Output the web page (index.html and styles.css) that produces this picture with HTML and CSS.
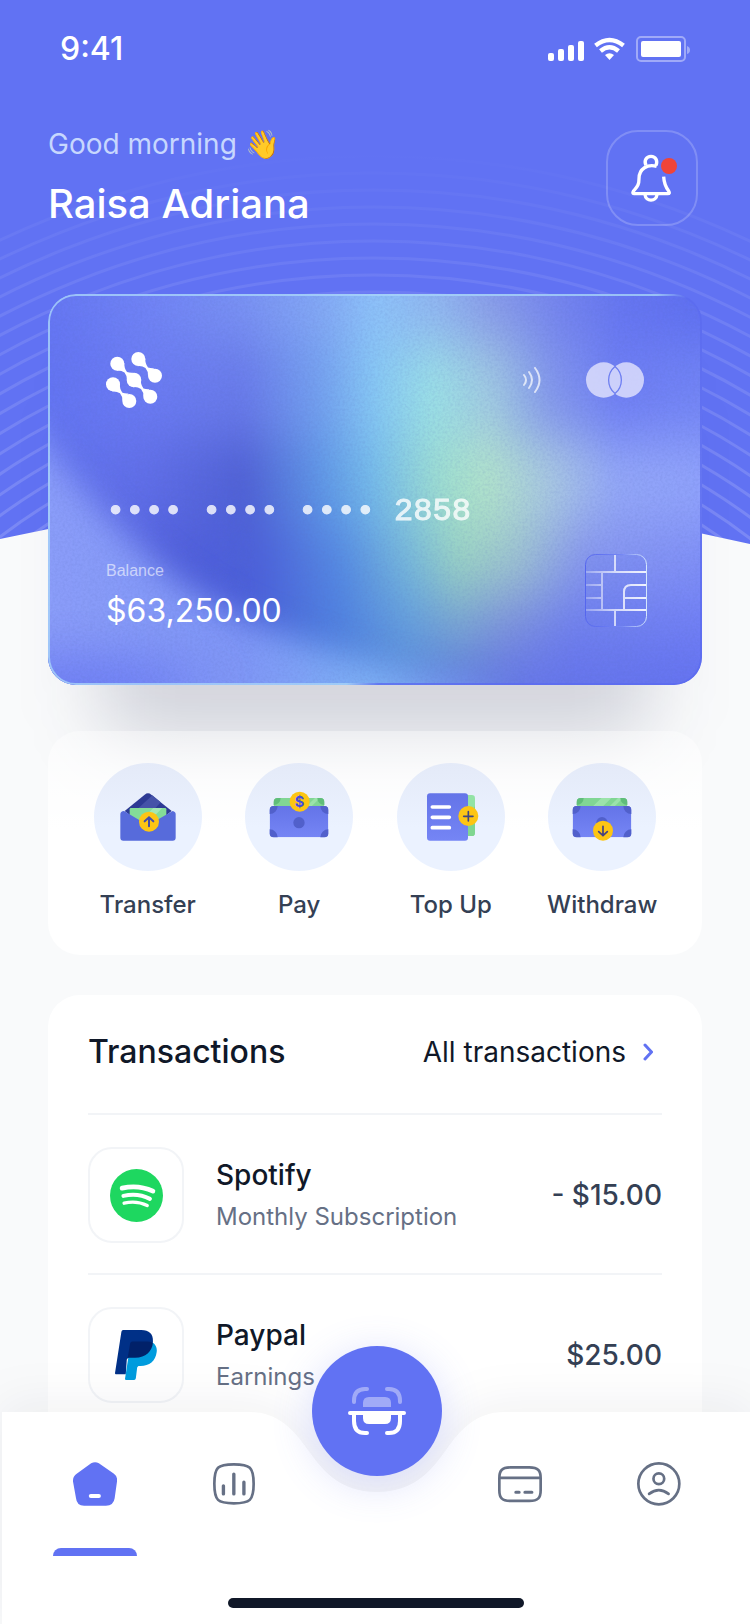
FILE: index.html
```html
<!DOCTYPE html>
<html lang="en">
<head>
  <meta charset="utf-8">
  <meta name="viewport" content="width=device-width, initial-scale=1">
  <title>Wallet</title>
  <link rel="stylesheet" href="styles.css">
</head>
<body>
  <div class="app">
    <svg class="backdrop" viewBox="0 0 750 560" aria-hidden="true">
      <defs>
        <linearGradient id="ring-fade" gradientUnits="userSpaceOnUse" x1="0" y1="150" x2="0" y2="540">
          <stop offset="0" stop-color="#fff" stop-opacity="0"/>
          <stop offset=".35" stop-color="#fff" stop-opacity=".08"/>
          <stop offset="1" stop-color="#fff" stop-opacity=".16"/>
        </linearGradient>
        <clipPath id="backdrop-clip">
          <path d="M0 0H750V544Q375 456 0 539Z"/>
        </clipPath>
      </defs>
      <g clip-path="url(#backdrop-clip)">
        <rect width="750" height="560" fill="#6172f3"/>
        <g fill="none" stroke="url(#ring-fade)" stroke-width="3">
          <circle cx="374" cy="1029" r="873"/>
          <circle cx="374" cy="1029" r="856"/>
          <circle cx="374" cy="1029" r="839"/>
          <circle cx="374" cy="1029" r="822"/>
          <circle cx="374" cy="1029" r="805"/>
          <circle cx="374" cy="1029" r="788"/>
          <circle cx="374" cy="1029" r="771"/>
          <circle cx="374" cy="1029" r="754"/>
          <circle cx="374" cy="1029" r="737"/>
          <circle cx="374" cy="1029" r="720"/>
          <circle cx="374" cy="1029" r="703"/>
          <circle cx="374" cy="1029" r="686"/>
          <circle cx="374" cy="1029" r="669"/>
          <circle cx="374" cy="1029" r="652"/>
          <circle cx="374" cy="1029" r="635"/>
          <circle cx="374" cy="1029" r="618"/>
          <circle cx="374" cy="1029" r="601"/>
        </g>
      </g>
    </svg>

    <div class="status-bar">
      <span>9:41</span>
      <svg width="142" height="26" viewBox="0 0 142 26" fill="#fff" aria-hidden="true">
        <rect x="0" y="17" width="6" height="8" rx="2"/>
        <rect x="10" y="13" width="6" height="12" rx="2"/>
        <rect x="20" y="9" width="6" height="16" rx="2"/>
        <rect x="30" y="5" width="6" height="20" rx="2"/>
        <g fill="none" stroke="#fff" stroke-width="4.4">
          <path d="M47.5 9.5Q61.500-1.500 75.500 9.500"/>
          <path d="M52.500 15Q61.500 7.500 70.500 15"/>
        </g>
        <path d="M57 19Q61.500 15.500 66 19L61.500 24Z"/>
        <rect x="89" y="1" width="48" height="24" rx="4" fill="none" stroke="#fff" stroke-opacity=".4" stroke-width="2"/>
        <rect x="93" y="5" width="40" height="16" rx="2"/>
        <path d="M139 10Q142 11 142 14T139 18Z" fill-opacity=".4"/>
      </svg>
    </div>

    <header class="header">
      <div>
        <p class="greeting">Good morning 👋</p>
        <h1 class="user-name">Raisa Adriana</h1>
      </div>
      <button class="bell-button" type="button" aria-label="Notifications">
        <svg width="50" height="48" viewBox="0 0 150 144" fill="none" stroke="#fff" stroke-width="10" aria-hidden="true">
          <path d="M89 37C62 29 36 44 36 74C36 94 30 98 19 112C16 117 18 119 22 119H122C128 119 128 116 125 111C115 98 111 88 110 68"/>
          <path d="M57 34C50 20 58 7 72 7S93 20 87 34"/>
          <path d="M54 122C56 144 88 144 90 122"/>
          <circle cx="126" cy="36" r="24" fill="#f04438" stroke="none"/>
        </svg>
      </button>
    </header>

    <main class="content">
      <section class="card">
        <svg class="card-art" viewBox="0 0 654 391" preserveAspectRatio="none" aria-hidden="true">
          <defs>
            <filter id="blend" x="-5%" y="-5%" width="110%" height="110%" color-interpolation-filters="sRGB"><feGaussianBlur stdDeviation="10 28"/></filter>
            <filter id="soft" x="-30%" y="-30%" width="160%" height="160%" color-interpolation-filters="sRGB"><feGaussianBlur stdDeviation="16"/></filter>
            <filter id="corner" x="-80%" y="-80%" width="260%" height="260%" color-interpolation-filters="sRGB"><feGaussianBlur stdDeviation="26"/></filter>
            <filter id="grain" x="0" y="0" width="100%" height="100%">
              <feTurbulence type="fractalNoise" baseFrequency=".4" numOctaves="2"/>
              <feColorMatrix values="0 0 0 0 .1  0 0 0 0 .15  0 0 0 0 .5  0 0 0 -.9 .55"/>
            </filter>
            <linearGradient id="row-1" gradientUnits="userSpaceOnUse" x1="0" x2="654">
              <stop offset="0" stop-color="#6576f3"/>
              <stop offset=".15" stop-color="#7083f5"/>
              <stop offset=".3" stop-color="#7a92f4"/>
              <stop offset=".42" stop-color="#84a9f5"/>
              <stop offset=".5" stop-color="#8dc2f9"/>
              <stop offset=".6" stop-color="#90b4f0"/>
              <stop offset=".68" stop-color="#889be9"/>
              <stop offset=".78" stop-color="#7484ee"/>
              <stop offset=".88" stop-color="#6575f1"/>
              <stop offset="1" stop-color="#5e6ff1"/>
            </linearGradient>
            <linearGradient id="row-2" gradientUnits="userSpaceOnUse" x1="0" x2="654">
              <stop offset="0" stop-color="#6374f2"/>
              <stop offset=".15" stop-color="#6b7bf3"/>
              <stop offset=".3" stop-color="#697bea"/>
              <stop offset=".42" stop-color="#74a2ef"/>
              <stop offset=".5" stop-color="#86c8f4"/>
              <stop offset=".59" stop-color="#9be0e6"/>
              <stop offset=".68" stop-color="#a0c8e2"/>
              <stop offset=".77" stop-color="#8397ec"/>
              <stop offset=".87" stop-color="#6e7ef4"/>
              <stop offset="1" stop-color="#7284f5"/>
            </linearGradient>
            <linearGradient id="row-3" gradientUnits="userSpaceOnUse" x1="0" x2="654">
              <stop offset="0" stop-color="#6273ee"/>
              <stop offset=".15" stop-color="#606ee8"/>
              <stop offset=".3" stop-color="#4f60d4"/>
              <stop offset=".42" stop-color="#5f98e6"/>
              <stop offset=".5" stop-color="#76bdea"/>
              <stop offset=".6" stop-color="#9eded0"/>
              <stop offset=".67" stop-color="#b2e4ca"/>
              <stop offset=".78" stop-color="#a8c6e4"/>
              <stop offset=".87" stop-color="#94a8f8"/>
              <stop offset="1" stop-color="#91a3fc"/>
            </linearGradient>
            <linearGradient id="row-4" gradientUnits="userSpaceOnUse" x1="0" x2="654">
              <stop offset="0" stop-color="#5a68e4"/>
              <stop offset=".22" stop-color="#4f5edb"/>
              <stop offset=".33" stop-color="#4c62da"/>
              <stop offset=".45" stop-color="#558be2"/>
              <stop offset=".55" stop-color="#76b8da"/>
              <stop offset=".63" stop-color="#9ad3c2"/>
              <stop offset=".72" stop-color="#9dc2d0"/>
              <stop offset=".82" stop-color="#8796ee"/>
              <stop offset="1" stop-color="#8090f7"/>
            </linearGradient>
            <linearGradient id="row-5" gradientUnits="userSpaceOnUse" x1="0" x2="654">
              <stop offset=".3" stop-color="#495cd8"/>
              <stop offset=".45" stop-color="#4f81e0"/>
              <stop offset=".55" stop-color="#639ddd"/>
              <stop offset=".63" stop-color="#78a4d2"/>
              <stop offset=".7" stop-color="#7d93dc"/>
              <stop offset=".8" stop-color="#7080ee"/>
              <stop offset="1" stop-color="#707ff5"/>
            </linearGradient>
            <linearGradient id="row-6" gradientUnits="userSpaceOnUse" x1="0" x2="654">
              <stop offset=".4" stop-color="#5282de"/>
              <stop offset=".55" stop-color="#5c8cdc"/>
              <stop offset=".65" stop-color="#627ce0"/>
              <stop offset=".74" stop-color="#6575ea"/>
              <stop offset="1" stop-color="#6472f0"/>
            </linearGradient>
            <linearGradient id="sweep" gradientUnits="userSpaceOnUse" x1="0" x2="654">
              <stop offset="0" stop-color="#8b9df9"/>
              <stop offset=".3" stop-color="#7f96f6"/>
              <stop offset=".5" stop-color="#7eb2f5"/>
              <stop offset=".68" stop-color="#7489ee"/>
            </linearGradient>
            <linearGradient id="card-edge" gradientUnits="userSpaceOnUse" x1="0" y1="0" x2="392" y2="313">
              <stop offset="0" stop-color="#a9d4fb"/>
              <stop offset=".95" stop-color="#a6d3f8"/>
              <stop offset="1.000" stop-color="#5b6bf0"/>
            </linearGradient>
          </defs>
          <g filter="url(#blend)">
            <rect x="-60" y="-100" width="774" height="150" fill="url(#row-1)"/>
            <rect x="-60" y="50" width="774" height="95" fill="url(#row-2)"/>
            <rect x="-60" y="145" width="774" height="85" fill="url(#row-3)"/>
            <rect x="-60" y="230" width="774" height="70" fill="url(#row-4)"/>
            <rect x="-60" y="300" width="774" height="60" fill="url(#row-5)"/>
            <rect x="-60" y="360" width="774" height="140" fill="url(#row-6)"/>
          </g>
          <path d="M-60 60C-10 160 50 215 115 275C190 335 290 368 450 396V460H-60Z" fill="url(#sweep)" filter="url(#soft)"/>
          <ellipse cx="20" cy="395" rx="130" ry="30" fill="#6b7bf3" filter="url(#corner)"/>
          <rect width="654" height="391" filter="url(#grain)" opacity=".3"/>
          <rect x="1" y="1" width="652" height="389" rx="27" fill="none" stroke="url(#card-edge)" stroke-width="2" opacity=".8"/>
        </svg>

        <div class="card-top">
          <svg width="56" height="56" viewBox="0 0 56 56" fill="#fff" aria-hidden="true">
            <circle cx="11.300" cy="11.700" r="7"/>
            <circle cx="32.300" cy="7" r="7"/>
            <circle cx="49" cy="23.700" r="7"/>
            <circle cx="28" cy="28" r="7.300"/>
            <circle cx="7" cy="32.300" r="7"/>
            <circle cx="44.300" cy="44.700" r="7"/>
            <circle cx="23.300" cy="49" r="7"/>
            <g id="link">
              <path d="M18.300 11Q18 16 21 20Q24 21 27 20.700L21 28Q21.300 24 18.500 20.500Q15 18.200 10.500 18.700Z"/>
            </g>
            <use href="#link" x="21" y="-4.500"/>
            <use href="#link" x="16.500" y="16.500"/>
            <use href="#link" x="-4.500" y="20.800"/>
          </svg>
          <div class="card-marks">
            <svg width="18" height="26" viewBox="0 0 18 26" fill="none" stroke="#fff" stroke-opacity=".7" stroke-width="2" stroke-linecap="round" aria-hidden="true">
              <path d="M1 8Q5 13 1 18"/>
              <path d="M6 5Q12 13 6 21"/>
              <path d="M12 1Q21 13 12 25"/>
            </svg>
            <svg width="58" height="36" viewBox="0 0 58 36" aria-hidden="true">
              <mask id="lens">
                <g fill="#fff">
                  <circle cx="17.700" cy="18" r="17.700"/>
                  <circle cx="40.300" cy="18" r="17.700"/>
                </g>
                <path d="M29 4.400A17.700 17.700 0 0 1 29 31.600A17.700 17.700 0 0 1 29 4.400Z" fill="none" stroke="#000" stroke-width="1.300"/>
              </mask>
              <rect width="58" height="36" fill="#e0e2fc" fill-opacity=".82" mask="url(#lens)"/>
            </svg>
          </div>
        </div>

        <p class="card-number">•••• •••• •••• 2858</p>

        <div class="card-bottom">
          <div>
            <p class="balance-label">Balance</p>
            <p class="balance-value">$63,250.00</p>
          </div>
          <svg width="62" height="73" viewBox="0 0 62 73" fill="none" aria-hidden="true">
            <defs>
              <linearGradient id="chip-line" gradientUnits="userSpaceOnUse" x1="0" y1="0" x2="62" y2="0">
                <stop offset="0" stop-color="#fff" stop-opacity=".25"/>
                <stop offset=".5" stop-color="#fff" stop-opacity=".7"/>
                <stop offset="1" stop-color="#fff" stop-opacity=".9"/>
              </linearGradient>
              <linearGradient id="chip-edge" x1="0" y1="0" x2="1" y2="0">
                <stop offset="0" stop-color="#5566ee"/>
                <stop offset=".6" stop-color="#7688f4"/>
                <stop offset="1" stop-color="#d4e6fd"/>
              </linearGradient>
            </defs>
            <rect x=".5" y=".5" width="61" height="72" rx="10" fill="#5b6ff0" fill-opacity=".15" stroke="url(#chip-edge)"/>
            <g stroke="url(#chip-line)" stroke-width="2">
              <path d="M30 1V18M1 18.010H61M17 18V56M1 31.010H17M1 44.010H17M1 56.010H61M30 56V72M39 56V38Q39 31 46 31H61M39 44.010H61"/>
            </g>
          </svg>
        </div>
      </section>

      <nav class="actions" aria-label="Quick actions">
        <a class="action" href="#transfer">
          <span class="action-icon">
            <svg width="108" height="108" viewBox="0 0 324 324" aria-hidden="true">
              <path d="M92 144L152 95Q162 87 172 95L233 144L162 200Z" fill="#2d3a94"/>
              <path d="M124 144L175 97L200 118L162 160Z" fill="#4552a8"/>
              <path d="M107 139Q107 135 111 135H213Q217 135 217 139V160L162 196L107 160Z" fill="#84dc98"/>
              <path d="M178 135H205L160 180L140 174Z" fill="#a3e7b2"/>
              <path d="M79 154Q79 145 90 144L152 181Q162 187 172 181L236 144Q245 146 245 154V224Q245 233 236 233H88Q79 233 79 224Z" fill="#576bdb"/>
              <circle cx="165" cy="176" r="30" fill="#fdc513"/>
              <path d="M165 190V164M152 175L165 163L178 175" fill="none" stroke="#444ca8" stroke-width="6" stroke-linecap="round"/>
            </svg>
          </span>
          Transfer
        </a>
        <a class="action" href="#pay">
          <span class="action-icon">
            <svg width="108" height="108" viewBox="0 0 324 324" aria-hidden="true">
              <defs>
                <linearGradient id="note-fill" x1="0" y1="0" x2="0" y2="1">
                  <stop offset="0" stop-color="#6474e8"/>
                  <stop offset="1" stop-color="#7585f5"/>
                </linearGradient>
                <clipPath id="note-clip"><rect x="74" y="129" width="176" height="94" rx="12"/></clipPath>
                <clipPath id="green-clip"><rect x="86" y="105" width="152" height="50" rx="12"/></clipPath>
              </defs>
              <g id="banknote">
                <g clip-path="url(#green-clip)">
                  <rect x="86" y="105" width="152" height="50" fill="#81d694"/>
                  <path d="M160 105H190L165 130H135ZM210 105H225L200 130H185Z" fill="#9be3aa"/>
                  <circle cx="86" cy="105" r="21" fill="#60bd7a"/>
                  <circle cx="238" cy="105" r="21" fill="#60bd7a"/>
                </g>
                <g clip-path="url(#note-clip)">
                  <rect x="74" y="129" width="176" height="94" fill="url(#note-fill)"/>
                  <g fill="#5160cb">
                    <circle cx="74" cy="129" r="24"/>
                    <circle cx="250" cy="129" r="24"/>
                    <circle cx="74" cy="223" r="24"/>
                    <circle cx="250" cy="223" r="24"/>
                    <circle cx="162" cy="179" r="17"/>
                  </g>
                </g>
              </g>
              <circle cx="164" cy="116" r="30" fill="#fdc513"/>
              <text class="coin-sign" x="164" y="132" text-anchor="middle">$</text>
            </svg>
          </span>
          Pay
        </a>
        <a class="action" href="#top-up">
          <span class="action-icon">
            <svg width="108" height="108" viewBox="0 0 324 324" aria-hidden="true">
              <rect x="180" y="96" width="54" height="123" rx="10" fill="#93e3a5"/>
              <path d="M213 152L234 130V209Q234 219 224 219H213Z" fill="#7fd691"/>
              <rect x="90" y="91" width="123" height="142" rx="9" fill="url(#note-fill)"/>
              <path d="M106 132H157M106 163H157M106 194H157" stroke="#fff" stroke-width="11" stroke-linecap="round"/>
              <circle cx="214" cy="159" r="30" fill="#fdc513"/>
              <path d="M200 160H228M214 146V174" stroke="#3f4580" stroke-width="5" stroke-linecap="round"/>
            </svg>
          </span>
          Top Up
        </a>
        <a class="action" href="#withdraw">
          <span class="action-icon">
            <svg width="108" height="108" viewBox="0 0 324 324" aria-hidden="true">
              <use href="#banknote"/>
              <circle cx="165" cy="203" r="30" fill="#fdc513"/>
              <path d="M165 190V217M152 206L165 218L178 206" fill="none" stroke="#444080" stroke-width="5" stroke-linecap="round"/>
            </svg>
          </span>
          Withdraw
        </a>
      </nav>

      <section class="transactions">
        <div class="transactions-head">
          <h2>Transactions</h2>
          <a class="all-link" href="#transactions">
            All transactions
            <svg width="10" height="18" viewBox="0 0 10 18" fill="none" stroke="#6172f3" stroke-width="3" stroke-linecap="round" stroke-linejoin="round" aria-hidden="true">
              <path d="M2 2L8.500 9L2 16"/>
            </svg>
          </a>
        </div>
        <ul class="transaction-list">
          <li class="transaction">
            <span class="brand">
              <svg width="53" height="53" viewBox="0 0 158 158" aria-hidden="true">
                <circle cx="79" cy="79" r="79" fill="#1ed760"/>
                <g fill="none" stroke="#fff" stroke-linecap="round">
                  <path d="M36 57Q85 46 128 66" stroke-width="14"/>
                  <path d="M40 80Q83 70 119 89" stroke-width="12"/>
                  <path d="M42 102Q79 93 111 109" stroke-width="10"/>
                </g>
              </svg>
            </span>
            <div class="details">
              <p class="name">Spotify</p>
              <p class="note">Monthly Subscription</p>
            </div>
            <span class="amount">- $15.00</span>
          </li>
          <li class="transaction">
            <span class="brand">
              <svg width="42" height="50" viewBox="0 0 125 149" aria-hidden="true">
                <path d="M24 0H78C102 0 114 12 113 34C112 62 95 82 60 83H42C38 83 36 85 35 89L32 132H4C1 132 0 131 0 128L19 5Q20 0 24 0Z" fill="#003087"/>
                <path d="M112 37C122 44 126 54 124 66C121 92 102 107 76 107H72C69 107 67 109 66 112L62 144Q61 149 57 149H33Q29 149 30 144L40 80Z" fill="#009cde"/>
                <path d="M52 34H90C100 34 108 35 113 38C110 64 92 82 60 83H42C40 83 38 84 37 88L45 40Q46 34 52 34Z" fill="#012169"/>
              </svg>
            </span>
            <div class="details">
              <p class="name">Paypal</p>
              <p class="note">Earnings</p>
            </div>
            <span class="amount">$25.00</span>
          </li>
        </ul>
      </section>
    </main>

    <nav class="tab-bar" aria-label="Main">
      <svg class="tab-shape" viewBox="0 0 748 212" preserveAspectRatio="none" aria-hidden="true">
        <path d="M0 0H248C276 0 292 18 306 38C320 58 338 80 375 80S430 58 444 38C458 18 474 0 502 0H748V212H0Z" fill="#fff"/>
      </svg>
      <div class="tabs">
        <a class="tab active" href="#home" aria-label="Home">
          <svg width="44" height="44" viewBox="0 0 131 131" aria-hidden="true">
            <path d="M54 4Q66-3 77 4L122 35Q133 43 131 58L124 108Q121 130 98 130H33Q11 130 9 108L0 58Q-1 43 11 35Z" fill="#6172f3"/>
            <path d="M53 101H77" stroke="#fff" stroke-width="12" stroke-linecap="round"/>
          </svg>
        </a>
        <a class="tab" href="#stats" aria-label="Statistics">
          <svg width="44" height="44" viewBox="-3 -3 131 131" fill="none" stroke="#667085" stroke-linecap="round" aria-hidden="true">
            <path d="M62 4C110 4 121 12 121 62S110 120 62 120S4 112 4 62S14 4 62 4Z" stroke-width="8"/>
            <path d="M31 68V92M62 33V92M92 57V92" stroke-width="10"/>
          </svg>
        </a>
        <button class="scan-button" type="button" aria-label="Scan">
          <svg width="60" height="48" viewBox="0 0 60 48" fill="none" stroke="#fff" stroke-width="4" stroke-linecap="round" aria-hidden="true">
            <g opacity=".4">
              <path d="M7 15V14C7 6 11 2 18 2H20M40 2H42C49 2 53 6 53 14V15"/>
              <path d="M16 20V16Q16 10 22 10H38Q44 10 44 16V20Z" fill="#fff" stroke="none"/>
            </g>
            <path d="M3 26H57M7 26V34C7 42 11 46 18 46H20M40 46H42C49 46 53 42 53 34V26"/>
            <path d="M16 27H44V31Q44 37 38 37H22Q16 37 16 31Z" fill="#fff" stroke="none"/>
          </svg>
        </button>
        <a class="tab" href="#cards" aria-label="Cards">
          <svg width="44" height="44" viewBox="0 -12 131 131" fill="none" stroke="#667085" stroke-linecap="round" aria-hidden="true">
            <path d="M38 4H93C120 4 127 14 127 36V72C127 94 120 104 93 104H38C11 104 4 94 4 72V36C4 14 11 4 38 4ZM4 35H127" stroke-width="8"/>
            <path d="M53 78H63M80 78H101" stroke-width="9"/>
          </svg>
        </a>
        <a class="tab" href="#profile" aria-label="Profile">
          <svg width="44" height="44" viewBox="0 0 131 131" fill="none" stroke="#667085" stroke-width="8" stroke-linecap="round" aria-hidden="true">
            <circle cx="65" cy="65" r="61"/>
            <circle cx="65" cy="50" r="16"/>
            <path d="M36 95Q65 72 94 95"/>
          </svg>
        </a>
      </div>
      <div class="home-indicator"></div>
    </nav>
  </div>
</body>
</html>
```
FILE: styles.css
```css
* {
  box-sizing: border-box;
}

body {
  margin: 0;
  background: #f9fafb;
  color: #101828;
  font-family: Inter, "Liberation Sans", sans-serif;
}

h1, h2, p, ul {
  margin: 0;
  padding: 0;
  font-weight: 500;
}

ul {
  list-style: none;
}

a {
  color: inherit;
  text-decoration: none;
}

svg {
  display: block;
  flex-shrink: 0;
}

.app {
  position: relative;
  height: 100vh;
  overflow: hidden;
}

.backdrop {
  position: absolute;
  top: 0;
  left: 0;
  width: 100%;
  z-index: -1;
}

/* Top of the screen */
.status-bar {
  display: flex;
  justify-content: space-between;
  align-items: center;
  padding: 29px 60px 55px;
  color: #fff;
  font-size: 32px;
  font-weight: 500;
  line-height: 40px;
}

.header {
  display: flex;
  justify-content: space-between;
  align-items: center;
  padding: 0 52px 0 48px;
}

.greeting {
  color: #c7d7fe;
  font-size: 28px;
  font-weight: 400;
  line-height: 40px;
}

.user-name {
  margin-top: 12px;
  color: #fff;
  font-size: 40px;
  line-height: 56px;
}

.bell-button {
  display: flex;
  align-items: center;
  justify-content: center;
  width: 92px;
  height: 96px;
  padding: 0;
  border: 2px solid rgba(255, 255, 255, 0.2);
  border-radius: 32px;
  background: none;
}

.content {
  padding: 62px 48px 0;
}

/* Bank card */
.card {
  position: relative;
  padding: 58px 55px 54px 58px;
  border-radius: 28px;
  color: #fff;
}

.card::before {
  content: "";
  position: absolute;
  inset: 90px 50px -56px;
  z-index: -1;
  border-radius: 40px;
  background: rgba(24, 32, 72, 0.17);
  filter: blur(38px);
}

.card-art {
  position: absolute;
  inset: 0;
  width: 100%;
  height: 100%;
  border-radius: 28px;
}

.card-top, .card-number, .card-bottom {
  position: relative;
}

.card-top {
  display: flex;
  justify-content: space-between;
  align-items: center;
}

.card-marks {
  display: flex;
  align-items: center;
  gap: 45px;
  padding-right: 3px;
}

.card-number {
  margin: 84px 0 22px;
  font-family: "Liberation Mono", monospace;
  font-size: 32px;
  line-height: 40px;
  -webkit-text-stroke: 1px #fff;
  opacity: 0.8;
}

.card-bottom {
  display: flex;
  justify-content: space-between;
}

.balance-label {
  margin: 5px 0 8px;
  color: rgba(255, 255, 255, 0.6);
  font-family: "Liberation Sans", sans-serif;
  font-size: 16px;
  line-height: 24px;
}

.balance-value {
  font-size: 32px;
  font-weight: 400;
  line-height: 40px;
}

/* Quick actions */
.actions {
  display: grid;
  grid-template-columns: repeat(4, 1fr);
  margin-top: 46px;
  padding: 32px 24px;
  border-radius: 32px;
  background: linear-gradient(rgba(255, 255, 255, 0.4), #fff 100px);
}

.action {
  display: flex;
  flex-direction: column;
  align-items: center;
  gap: 16px;
  color: #344054;
  font-size: 24px;
  font-weight: 500;
  line-height: 36px;
}

.action-icon {
  border-radius: 50%;
  background: linear-gradient(#e4eaf8, #ebf2ff 60%);
}

.coin-sign {
  fill: #444ce0;
  font-size: 44px;
  font-weight: 700;
}

/* Transactions */
.transactions {
  margin-top: 40px;
  padding: 0 40px 200px;
  border-radius: 32px;
  background: #fff;
}

.transactions-head {
  display: flex;
  justify-content: space-between;
  align-items: center;
  padding: 37px 9px 41px 0;
}

.transactions-head h2 {
  font-size: 32px;
  line-height: 40px;
}

.all-link {
  display: flex;
  align-items: center;
  gap: 17px;
  font-size: 28px;
  line-height: 40px;
}

.transaction {
  display: flex;
  align-items: center;
  gap: 32px;
  padding: 32px 0 30px;
  border-top: 2px solid #f2f4f7;
}

.brand {
  display: flex;
  align-items: center;
  justify-content: center;
  width: 96px;
  height: 96px;
  border: 2px solid #f2f4f7;
  border-radius: 24px;
}

.details {
  flex: 1;
}

.name {
  font-size: 28px;
  line-height: 44px;
}

.note {
  color: #667085;
  font-size: 24px;
  font-weight: 400;
  line-height: 40px;
}

.amount {
  color: #344054;
  font-size: 28px;
  font-weight: 500;
}

/* Bottom tab bar */
.tab-bar {
  position: absolute;
  left: 2px;
  right: 0;
  bottom: 0;
}

.tab-shape {
  position: absolute;
  inset: 0;
  width: 100%;
  height: 100%;
  filter: drop-shadow(0 -8px 24px rgba(16, 24, 40, 0.06));
}

.tabs {
  position: relative;
  display: grid;
  grid-template-columns: 1fr 1fr 148px 1fr 1fr;
  padding: 0 22px 0 24px;
}

.tab {
  display: flex;
  flex-direction: column;
  align-items: center;
  gap: 42px;
  height: 144px;
  padding-top: 50px;
}

.tab.active::after {
  content: "";
  width: 84px;
  height: 8px;
  border-radius: 8px 8px 0 0;
  background: #6172f3;
}

.scan-button {
  display: flex;
  align-items: center;
  justify-content: center;
  justify-self: center;
  width: 130px;
  height: 130px;
  margin-top: -66px;
  padding: 0;
  border: none;
  border-radius: 50%;
  background: #6172f3;
  box-shadow: 0 8px 40px rgba(97, 114, 243, 0.24);
}

.home-indicator {
  position: relative;
  width: 296px;
  height: 10px;
  margin: 42px auto 16px;
  border-radius: 5px;
  background: #101828;
}
```
